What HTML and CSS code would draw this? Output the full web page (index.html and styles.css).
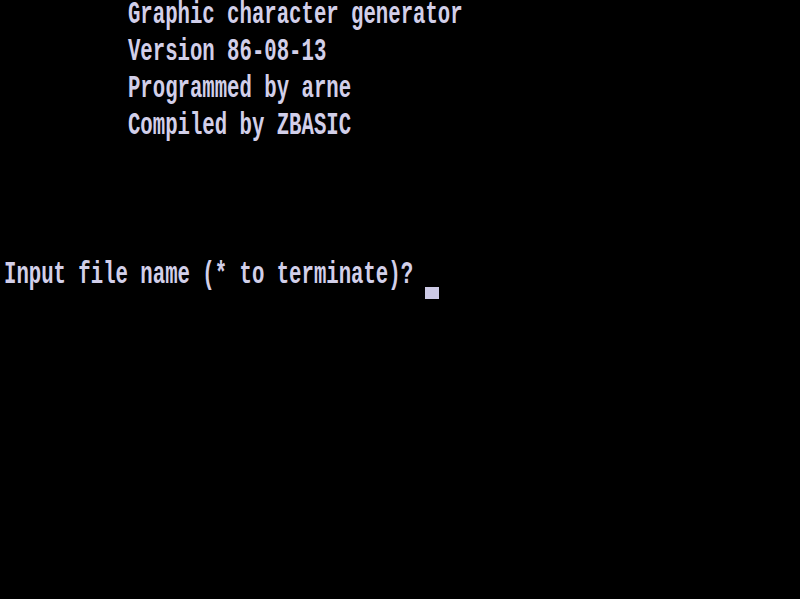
FILE: index.html
```html
<!DOCTYPE html>
<html>
<head>
<meta charset="utf-8">
<link rel="stylesheet" href="styles.css">
<title>Graphic character generator</title>
</head>
<body>
<main class="screen">
  <div class="row"><span class="text">          Graphic character generator</span></div>
  <div class="row"><span class="text">          Version 86-08-13</span></div>
  <div class="row"><span class="text">          Programmed by arne</span></div>
  <div class="row"><span class="text">          Compiled by ZBASIC</span></div>
  <div class="row"></div>
  <div class="row"></div>
  <div class="row"></div>
  <div class="row"><span class="text">Input file name (* to terminate)? </span><span class="cursor"></span></div>
</main>
</body>
</html>
```
FILE: styles.css
```css
html, body {
  margin: 0;
  padding: 0;
  background: #000;
  width: 800px;
  height: 599px;
  overflow: hidden;
}

.screen {
  display: flex;
  flex-direction: column;
  padding: 0 0 0 4px;
}

.row {
  height: 37.14px;
  display: flex;
  align-items: flex-start;
}

.text {
  display: inline-block;
  white-space: pre;
  font-family: "Liberation Mono", monospace;
  font-weight: bold;
  font-size: 20.67px;
  line-height: 1;
  color: #d2cfe9;
  transform: scaleY(1.52);
  transform-origin: 0 0;
}

.cursor {
  display: block;
  width: 14px;
  height: 12px;
  margin-top: 27px;
  background: #cdcae6;
}
```
